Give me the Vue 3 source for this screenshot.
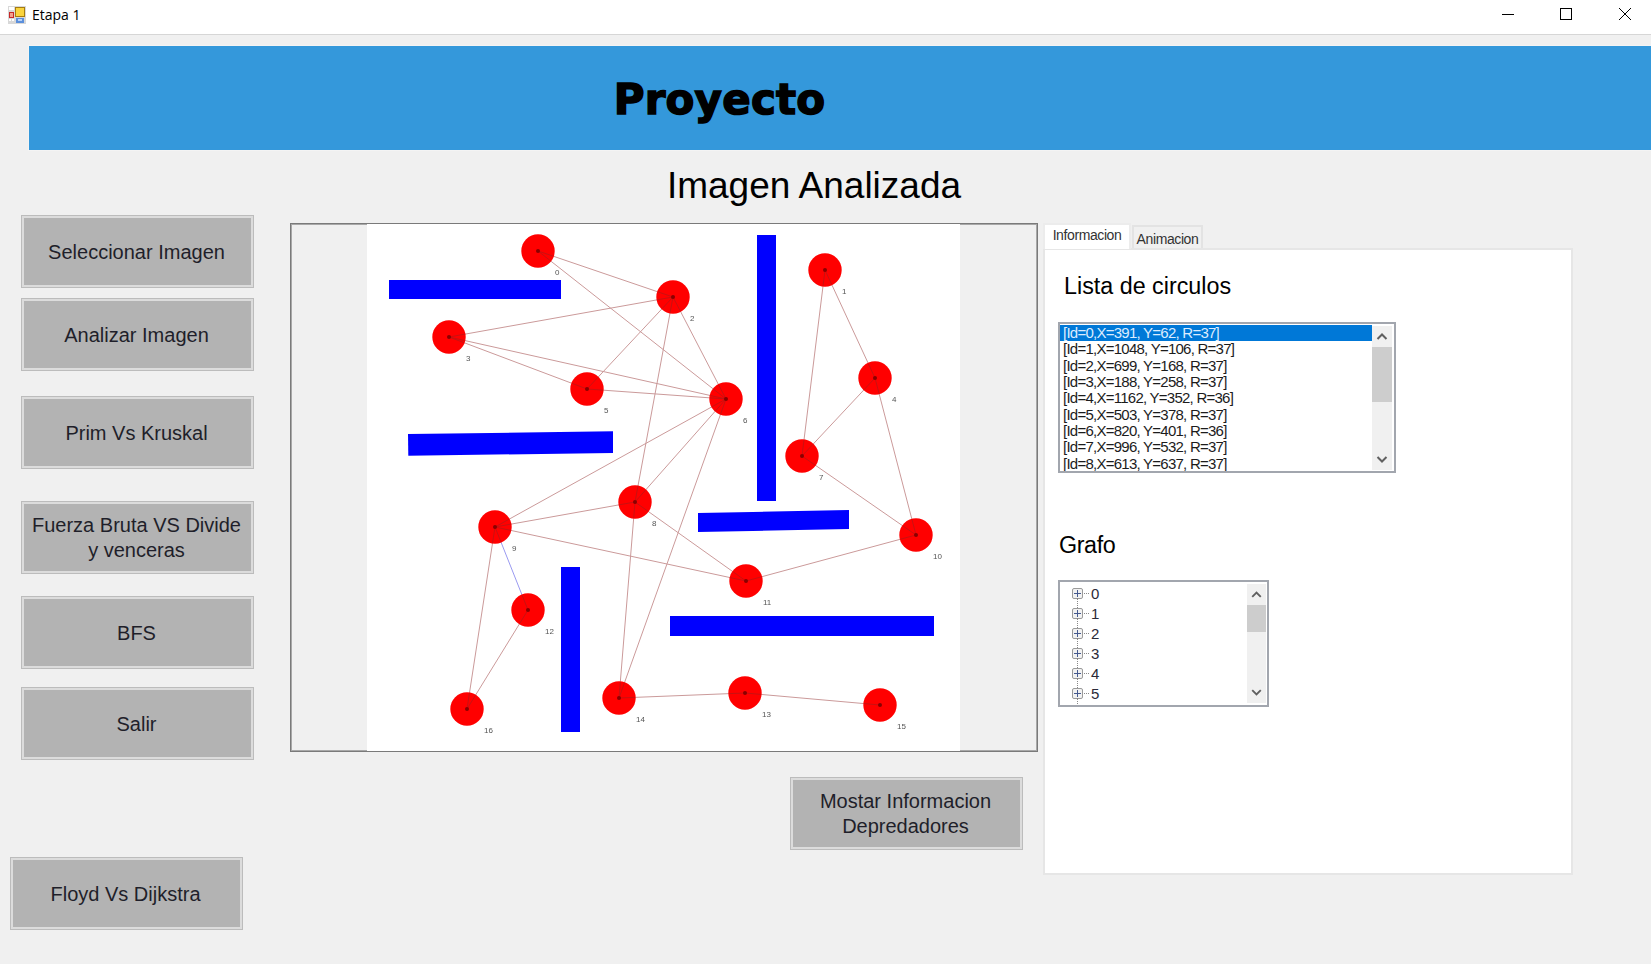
<template>
  <div class="window">
    <header class="titlebar">
      <svg class="app-icon" width="20" height="20" viewBox="0 0 20 20">
        <rect x="1" y="1" width="18" height="18" fill="#d8d8d8" />
        <rect x="2" y="2" width="5" height="3" fill="#fff" />
        <rect x="2" y="14" width="2" height="2" fill="#fff" />
        <rect x="5" y="14" width="2" height="2" fill="#fff" />
        <rect x="2" y="7" width="5" height="6" fill="#c62828" />
        <rect x="3" y="8" width="3" height="4" fill="#f3a08c" />
        <rect x="8" y="2" width="10" height="10" fill="#a67c10" />
        <rect x="9" y="3" width="8" height="8" fill="#fad43e" />
        <rect x="9" y="13" width="8" height="5" fill="#5b8fdc" />
        <rect x="11" y="14" width="4" height="2" fill="#b9d2f5" />
      </svg>
      <span class="title-text">Etapa 1</span>
      <div class="controls">
        <svg width="14" height="14" viewBox="0 0 14 14"><path d="M1 7.5h12" stroke="#000" fill="none" /></svg>
        <svg width="14" height="14" viewBox="0 0 14 14"><rect x="1.5" y="1.5" width="11" height="11" stroke="#000" fill="none" /></svg>
        <svg width="14" height="14" viewBox="0 0 14 14"><path d="M1 1l12 12M13 1L1 13" stroke="#000" fill="none" /></svg>
      </div>
    </header>

    <div class="banner"><h1>Proyecto</h1></div>
    <h2 class="heading">Imagen Analizada</h2>

    <main class="main">
      <div class="left-col">
        <button v-for="b in buttons" :key="b" class="win-btn side-btn">{{ b }}</button>
      </div>

      <div class="center-col">
        <div class="picture-box">
          <svg class="graph" width="593" height="527" viewBox="367 224 593 527">
            <polygon v-for="(r, i) in walls" :key="'w' + i" :points="r" fill="#0000ff" />
            <line
              v-for="(e, i) in edges"
              :key="'e' + i"
              :x1="nodes[e[0]][0]"
              :y1="nodes[e[0]][1]"
              :x2="nodes[e[1]][0]"
              :y2="nodes[e[1]][1]"
              stroke="#cb9a9a"
              stroke-width="1"
            />
            <line :x1="nodes[9][0]" :y1="nodes[9][1]" :x2="nodes[12][0]" :y2="nodes[12][1]" stroke="#9a9af0" stroke-width="1" />
            <g v-for="(n, i) in nodes" :key="'n' + i">
              <circle :cx="n[0]" :cy="n[1]" r="16.7" fill="#ff0000" />
              <line
                v-for="(t, j) in neighbours(i)"
                :key="j"
                :x1="n[0]"
                :y1="n[1]"
                :x2="t[0]"
                :y2="t[1]"
                stroke="#b01818"
                stroke-width="0.7"
              />
              <circle :cx="n[0]" :cy="n[1]" r="2" fill="#8a0000" />
              <text :x="n[0] + 17" :y="n[1] + 24" class="node-label">{{ i }}</text>
            </g>
          </svg>
        </div>
        <button class="win-btn info-btn">Mostar Informacion Depredadores</button>
      </div>

      <div class="right-col">
        <div class="tabs">
          <div class="tab active">Informacion</div>
          <div class="tab">Animacion</div>
        </div>
        <div class="tab-panel">
          <div class="sub-title list-title">Lista de circulos</div>
          <div class="listbox">
            <ul class="list-items">
              <li v-for="(c, i) in circles" :key="i" :class="{ selected: i === 0 }">{{ c }}</li>
            </ul>
            <div class="scrollbar">
              <svg width="20" height="21" viewBox="0 0 20 21"><path d="M5.5 13l4.5-4.5 4.5 4.5" class="arrow" /></svg>
              <div class="track list-track"><div class="thumb list-thumb"></div></div>
              <svg width="20" height="21" viewBox="0 0 20 21"><path d="M5.5 8l4.5 4.5 4.5-4.5" class="arrow" /></svg>
            </div>
          </div>

          <div class="sub-title grafo-title">Grafo</div>
          <div class="treeview">
            <ul class="tree-items">
              <li v-for="i in 6" :key="i">
                <span class="plus"></span>
                <span class="dots"></span>
                <span>{{ i - 1 }}</span>
              </li>
            </ul>
            <div class="scrollbar">
              <svg width="19" height="21" viewBox="0 0 20 21"><path d="M5.5 13l4.5-4.5 4.5 4.5" class="arrow" /></svg>
              <div class="track tree-track"><div class="thumb tree-thumb"></div></div>
              <svg width="19" height="21" viewBox="0 0 20 21"><path d="M5.5 8l4.5 4.5 4.5-4.5" class="arrow" /></svg>
            </div>
          </div>
        </div>
      </div>
    </main>
  </div>
</template>

<script setup>
const buttons = [
  'Seleccionar Imagen',
  'Analizar Imagen',
  'Prim Vs Kruskal',
  'Fuerza Bruta VS Divide y venceras',
  'BFS',
  'Salir',
  'Floyd Vs Dijkstra'
]

const circles = [
  '[Id=0,X=391, Y=62, R=37]',
  '[Id=1,X=1048, Y=106, R=37]',
  '[Id=2,X=699, Y=168, R=37]',
  '[Id=3,X=188, Y=258, R=37]',
  '[Id=4,X=1162, Y=352, R=36]',
  '[Id=5,X=503, Y=378, R=37]',
  '[Id=6,X=820, Y=401, R=36]',
  '[Id=7,X=996, Y=532, R=37]',
  '[Id=8,X=613, Y=637, R=37]'
]

// centros medidos sobre la imagen
const nodes = [
  [538, 251], [825, 270], [673, 297], [449, 337], [875, 378], [587, 389],
  [726, 399], [802, 456], [635, 502], [495, 527], [916, 535], [746, 581],
  [528, 610], [745, 693], [619, 698], [880, 705], [467, 709]
]

const edges = [
  [0, 2], [0, 6], [2, 3], [2, 5], [2, 6], [2, 8], [3, 5], [3, 6], [5, 6],
  [6, 8], [6, 9], [6, 14], [8, 9], [8, 11], [8, 14], [9, 11], [9, 16],
  [12, 16], [14, 13], [13, 15], [1, 4], [1, 7], [4, 7], [4, 10], [7, 10],
  [10, 11]
]

const walls = [
  '389,280 561,280 561,299 389,299',
  '408,434 613,431.3 613,453 408.3,455.7',
  '757,235 776,235 776,501 757,501',
  '698,513 849,510 849,529 698,532',
  '670,616 934,616 934,636 670,636',
  '561,567 580,567 580,732 561,732'
]

// tramo de la arista que queda dentro del circulo
const neighbours = (i) => {
  const out = []
  const all = [...edges, [9, 12]]
  all.forEach(([a, b]) => {
    if (a !== i && b !== i) return
    const from = nodes[i]
    const to = nodes[a === i ? b : a]
    const d = Math.hypot(to[0] - from[0], to[1] - from[1])
    out.push([from[0] + ((to[0] - from[0]) / d) * 16, from[1] + ((to[1] - from[1]) / d) * 16])
  })
  return out
}
</script>

<style scoped>
.window {
  width: 1651px;
  height: 964px;
  overflow: hidden;
  background: #f0f0f0;
  font-family: "Liberation Sans", Arial, sans-serif;
  color: #1c1c1c;
}

.titlebar {
  height: 34px;
  background: #fff;
  border-bottom: 1px solid #d6d6d6;
  display: flex;
  align-items: center;
  padding-left: 7px;
  box-sizing: content-box;
  margin-bottom: 11px;
}

.app-icon {
  margin-top: -5px;
}

.title-text {
  margin-left: 5px;
  margin-top: -5px;
  font-family: "Open Sans", sans-serif;
  font-size: 14px;
  color: #000;
}

.controls {
  margin-left: auto;
  display: flex;
  gap: 44px;
  padding-right: 19px;
  margin-top: -6px;
}

.controls svg:last-child {
  margin-left: 1px;
}

.banner {
  height: 104px;
  margin-left: 29px;
  background: #3498db;
  box-shadow: 0 0 0 1px rgba(255, 255, 255, 0.3);
  display: flex;
  justify-content: center;
  align-items: center;
  padding: 3px 241px 0 0;
  box-sizing: border-box;
}

.banner h1 {
  margin: 0;
  font-family: "DejaVu Sans", sans-serif;
  font-weight: 700;
  font-size: 42px;
  color: #000;
  -webkit-text-stroke: 1.5px #000;
  letter-spacing: 0.2px;
}

.heading {
  margin: 15px 0 8px;
  padding-right: 23px;
  text-align: center;
  font-weight: 400;
  font-size: 37px;
  line-height: 42px;
  color: #000;
}

.main {
  display: flex;
  align-items: flex-start;
}

.left-col {
  width: 280px;
  margin-left: 10px;
  display: flex;
  flex-direction: column;
  align-items: flex-start;
}

.win-btn {
  width: 233px;
  height: 73px;
  box-sizing: border-box;
  padding: 1px 10px 0 8px;
  background: #b3b3b3;
  border: 1px solid #bcbcbc;
  outline: 2px solid #dcdcdc;
  outline-offset: -3px;
  font-family: inherit;
  font-size: 20px;
  line-height: 25px;
  color: #1f1f2a;
}

.side-btn {
  margin-left: 11px;
}

.side-btn:nth-child(2) { margin-top: 10px; }
.side-btn:nth-child(3) { margin-top: 25px; }
.side-btn:nth-child(4) { margin-top: 32px; }
.side-btn:nth-child(5) { margin-top: 22px; }
.side-btn:nth-child(6) { margin-top: 18px; }
.side-btn:nth-child(7) { margin-top: 97px; margin-left: 0; }

.center-col {
  width: 748px;
  margin-top: 8px;
  display: flex;
  flex-direction: column;
}

.picture-box {
  height: 529px;
  box-sizing: border-box;
  border: 1px solid #7a7a7a;
  outline: 1px solid #a8a8a8;
  outline-offset: -2px;
  display: flex;
  padding-left: 76px;
}

.graph {
  display: block;
  background: #fff;
  filter: blur(0.35px);
}

.node-label {
  font-family: "Liberation Sans", sans-serif;
  font-size: 8px;
  fill: #555;
}

.info-btn {
  align-self: flex-end;
  margin: 25px 15px 0 0;
}

.right-col {
  width: 530px;
  margin: 8px 0 0 5px;
}

.tabs {
  height: 25px;
  display: flex;
  align-items: flex-end;
  font-size: 14px;
  letter-spacing: -0.4px;
}

.tab {
  height: 23px;
  width: 71px;
  box-sizing: border-box;
  background: #f0f0f0;
  border: 2px solid #e3e3e3;
  border-bottom: none;
  margin-left: 1px;
  text-align: center;
  line-height: 24px;
  color: #333;
}

.tab.active {
  height: 26px;
  width: 88px;
  margin: 0 0 -1px 0;
  position: relative;
  background: #fff;
  border-color: #ececec;
  line-height: 21px;
  z-index: 1;
}

.tab-panel {
  height: 627px;
  box-sizing: border-box;
  background: #fff;
  border: 2px solid #e6e6e6;
  padding-left: 13px;
}

.sub-title {
  font-size: 23.3px;
  line-height: 28px;
  color: #000;
}

.list-title {
  margin: 22px 0 0 6px;
}

.grafo-title {
  margin: 58px 0 0 1px;
  letter-spacing: -0.4px;
}

.listbox,
.treeview {
  display: flex;
  box-sizing: border-box;
  border: 2px solid #a2a6ae;
  background: #fff;
  overflow: hidden;
}

.listbox {
  width: 338px;
  height: 151px;
  margin-top: 22px;
  padding: 1px 2px 0 0;
}

.list-items,
.tree-items {
  flex: 1;
  margin: 0;
  padding: 0;
  list-style: none;
}

.list-items li {
  height: 16.33px;
  line-height: 15px;
  padding-left: 3px;
  font-size: 15px;
  letter-spacing: -0.75px;
  white-space: nowrap;
  color: #1c1c1c;
}

.list-items li.selected {
  background: #0078d7;
  color: #dcecff;
}

.scrollbar {
  flex: none;
  width: 20px;
  background: #f0f0f0;
  display: flex;
  flex-direction: column;
  justify-content: space-between;
}

.treeview .scrollbar {
  width: 19px;
  margin-top: 2px;
  height: 119px;
}

.list-items + .scrollbar {
  height: 144px;
  margin-top: 1px;
}

.track {
  flex: 1;
}

.thumb {
  background: #cdcdcd;
}

.list-thumb {
  height: 55px;
}

.tree-thumb {
  height: 27px;
}

.arrow {
  fill: none;
  stroke: #606060;
  stroke-width: 2;
}

.treeview {
  width: 211px;
  height: 127px;
  margin: 21px 0 0 0;
  padding-right: 1px;
}

.tree-items {
  padding: 1px 0 0 12px;
}

.tree-items li {
  height: 20px;
  display: flex;
  align-items: center;
  font-size: 15px;
  color: #2a2a38;
  position: relative;
}

/* linea punteada del arbol */
.tree-items li::before {
  content: "";
  position: absolute;
  left: 5px;
  top: 15px;
  height: 10px;
  border-left: 1px dotted #888;
}

.plus {
  width: 11px;
  height: 11px;
  box-sizing: border-box;
  border: 1px solid #9a9a9a;
  border-radius: 2px;
  background:
    linear-gradient(#44598f, #44598f) center / 7px 1px no-repeat,
    linear-gradient(#44598f, #44598f) center / 1px 7px no-repeat,
    #f2f2f2;
}

.dots {
  width: 5px;
  margin: 0 2px 0 1px;
  border-top: 1px dotted #888;
}
</style>

<style>
html, body {
  margin: 0;
  background: #f0f0f0;
}
</style>
